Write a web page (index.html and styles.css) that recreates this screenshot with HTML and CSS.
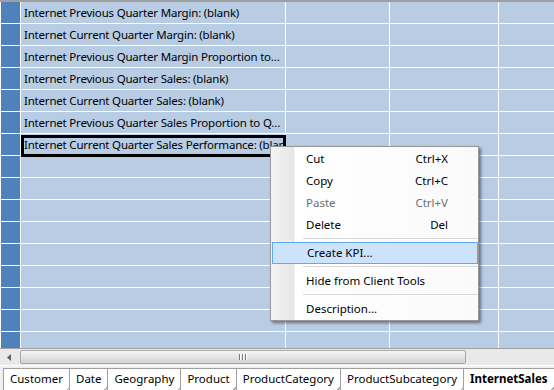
FILE: index.html
```html
<!DOCTYPE html>
<html lang="en">
<head>
	<meta charset="UTF-8">
	<title>InternetSales</title>
	<link rel="stylesheet" href="styles.css">
</head>
<body>
	<div class="sheet">
		<div class="grid">
			<div class="hd"></div><div class="c">Internet Previous Quarter Margin: (blank)</div><div class="c"></div><div class="c"></div><div class="c"></div>
			<div class="hd"></div><div class="c">Internet Current Quarter Margin: (blank)</div><div class="c"></div><div class="c"></div><div class="c"></div>
			<div class="hd"></div><div class="c">Internet Previous Quarter Margin Proportion to…</div><div class="c"></div><div class="c"></div><div class="c"></div>
			<div class="hd"></div><div class="c">Internet Previous Quarter Sales: (blank)</div><div class="c"></div><div class="c"></div><div class="c"></div>
			<div class="hd"></div><div class="c">Internet Current Quarter Sales: (blank)</div><div class="c"></div><div class="c"></div><div class="c"></div>
			<div class="hd"></div><div class="c">Internet Previous Quarter Sales Proportion to Q…</div><div class="c"></div><div class="c"></div><div class="c"></div>
			<div class="hd"></div><div class="c sel"><span class="clip">Internet Current Quarter Sales Performance: (blank)</span></div><div class="c"></div><div class="c"></div><div class="c"></div>
			<div class="hd"></div><div class="c"></div><div class="c"></div><div class="c"></div><div class="c"></div>
			<div class="hd"></div><div class="c"></div><div class="c"></div><div class="c"></div><div class="c"></div>
			<div class="hd"></div><div class="c"></div><div class="c"></div><div class="c"></div><div class="c"></div>
			<div class="hd"></div><div class="c"></div><div class="c"></div><div class="c"></div><div class="c"></div>
			<div class="hd"></div><div class="c"></div><div class="c"></div><div class="c"></div><div class="c"></div>
			<div class="hd"></div><div class="c"></div><div class="c"></div><div class="c"></div><div class="c"></div>
			<div class="hd"></div><div class="c"></div><div class="c"></div><div class="c"></div><div class="c"></div>
			<div class="hd"></div><div class="c"></div><div class="c"></div><div class="c"></div><div class="c"></div>
			<div class="hd"></div><div class="c"></div><div class="c"></div><div class="c"></div><div class="c"></div>
		</div>

		<div class="menu">
			<div class="item"><span>Cut</span><span>Ctrl+X</span></div>
			<div class="item"><span>Copy</span><span>Ctrl+C</span></div>
			<div class="item off"><span>Paste</span><span>Ctrl+V</span></div>
			<div class="item"><span>Delete</span><span>Del</span></div>
			<div class="sep"></div>
			<div class="item hot"><span>Create KPI...</span></div>
			<div class="sep"></div>
			<div class="item"><span>Hide from Client Tools</span></div>
			<div class="sep"></div>
			<div class="item"><span>Description...</span></div>
		</div>
	</div>

	<div class="hscroll">
		<div class="arrow"><svg width="4" height="7" viewBox="0 0 4 7"><path d="M4 0 L0 3.5 L4 7 Z" fill="#606060"/></svg></div>
		<div class="track">
			<div class="thumb"><span class="grip"></span><span class="grip"></span><span class="grip"></span></div>
		</div>
	</div>

	<div class="tabs">
		<div class="tab">Customer</div>
		<div class="tab">Date</div>
		<div class="tab">Geography</div>
		<div class="tab">Product</div>
		<div class="tab">ProductCategory</div>
		<div class="tab">ProductSubcategory</div>
		<div class="tab on">InternetSales</div>
	</div>
</body>
</html>
```

FILE: styles.css
```css
html, body {
	margin: 0;
	height: 100%;
	overflow: hidden;
}
body {
	background: #f0f0f0;
	font-family: "Noto Sans", "Open Sans", sans-serif;
	font-size: 11.5px;
	color: #000;
}
.sheet {
	position: relative;
	height: 346px;
	border-top: 2px solid #a0a0a0;
	background: #fff;
	overflow: hidden;
}
.grid {
	display: grid;
	grid-template-columns: 19px 264px 103px 108px 1fr;
	grid-auto-rows: 21px;
	gap: 1px;
	padding-left: 1px;
}
.hd {
	background: #4f81bd;
}
.c {
	background: #b8cce4;
	padding-left: 3px;
	line-height: 21px;
	letter-spacing: -0.2px;
	white-space: nowrap;
	overflow: hidden;
}
.c.sel {
	position: relative;
	overflow: visible;
}
.c.sel .clip {
	display: block;
	width: 259px;
	overflow: hidden;
}
.c.sel::after {
	content: "";
	position: absolute;
	top: 1px;
	left: 0;
	right: -1px;
	bottom: -2px;
	border: 3px solid #000;
}

/* context menu */
.menu {
	position: absolute;
	left: 270px;
	top: 144px;
	width: 207px;
	padding: 1px 0 0;
	border: 1px solid #979797;
	background: linear-gradient(to right, #f4f4f4 0, #e6e6e6 23px, #fff 24px, #fafafa 100%);
	box-shadow: 2px 2px 3px rgba(0, 0, 0, 0.45);
}
.item {
	display: flex;
	justify-content: space-between;
	height: 22px;
	line-height: 22px;
	padding: 0 30px 0 35px;
}
.item.off {
	color: #6d6d6d;
}
.item.hot {
	margin: 0 0 0 1px;
	padding-left: 34px;
	height: 20px;
	line-height: 20px;
	border: 1px solid #66a7e8;
	background: #cbe4fb;
}
.sep {
	height: 0;
	margin: 2px 0 2px 32px;
	border-top: 1px solid #d7d7d7;
	border-bottom: 1px solid #fff;
}

/* horizontal scrollbar */
.hscroll {
	display: flex;
	height: 16px;
	border-top: 1px solid #a0a0a0;
	background: #e9e9e9;
}
.arrow {
	width: 17px;
	display: flex;
	align-items: center;
	justify-content: center;
}
.track {
	flex: 1;
	padding: 1px 0;
}
.thumb {
	width: 444px;
	height: 12px;
	margin-left: 3px;
	border: 1px solid #a7a7a7;
	border-radius: 2px;
	background: linear-gradient(#f6f6f6, #e4e4e4 50%, #d2d2d2);
	display: flex;
	justify-content: center;
	align-items: center;
	gap: 1px;
}
.grip {
	width: 1px;
	height: 6px;
	border-right: 1px solid #fff;
	background: #7b7b7b;
}

/* sheet tabs */
.tabs {
	display: flex;
	height: 24px;
	padding: 2px 0 0 3px;
	border-top: 1px solid #fff;
}
.tab {
	position: relative;
	height: 21px;
	line-height: 20px;
	padding: 0 6px;
	background: #fff;
	border: 1px solid #a0a0a0;
	border-right-color: #c0c0c0;
	margin-right: -1px;
}
.tab::after {
	content: "";
	position: absolute;
	right: -1px;
	bottom: -1px;
	width: 5px;
	height: 5px;
	background: linear-gradient(135deg, transparent 50%, #a0a0a0 50%, #a0a0a0 62%, #f0f0f0 62%);
}
.tab.on {
	font-weight: bold;
}
```
